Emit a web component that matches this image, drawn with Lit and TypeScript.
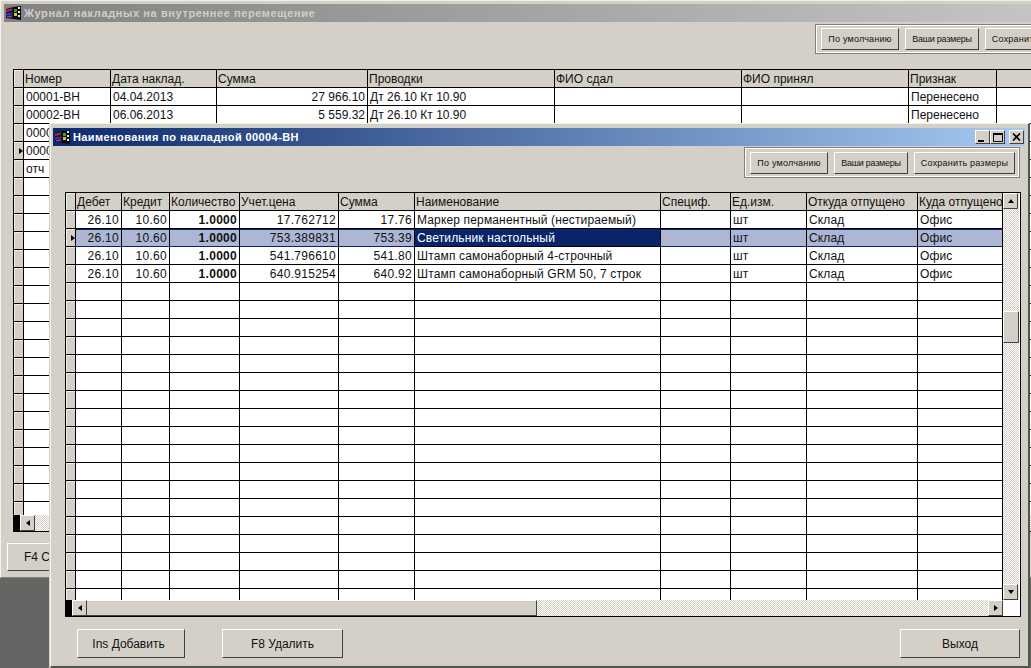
import { LitElement, html, css } from 'lit';
import { customElement } from 'lit/decorators.js';

type Column = { title: string; width: number; align?: string; bold?: boolean };

const backColumns: Column[] = [
  { title: 'Номер', width: 87 },
  { title: 'Дата наклад.', width: 106 },
  { title: 'Сумма', width: 151, align: 'right' },
  { title: 'Проводки', width: 187 },
  { title: 'ФИО сдал', width: 187 },
  { title: 'ФИО принял', width: 167 },
  { title: 'Признак', width: 88 },
  { title: '', width: 60 },
];

const backRows = [
  ['00001-ВН', '04.04.2013', '27 966.10', 'Дт 26.10 Кт 10.90', '', '', 'Перенесено', ''],
  ['00002-ВН', '06.06.2013', '5 559.32', 'Дт 26.10 Кт 10.90', '', '', 'Перенесено', ''],
  ['00003-ВН', '', '', '', '', '', '', ''],
  ['00004-ВН', '', '', '', '', '', '', ''],
  ['отч', '', '', '', '', '', '', ''],
];

const frontColumns: Column[] = [
  { title: 'Дебет', width: 46, align: 'right' },
  { title: 'Кредит', width: 48, align: 'right' },
  { title: 'Количество', width: 70, align: 'right', bold: true },
  { title: 'Учет.цена', width: 99, align: 'right' },
  { title: 'Сумма', width: 76, align: 'right' },
  { title: 'Наименование', width: 246 },
  { title: 'Специф.', width: 70 },
  { title: 'Ед.изм.', width: 76 },
  { title: 'Откуда отпущено', width: 111 },
  { title: 'Куда отпущено', width: 85 },
];

const frontRows = [
  ['26.10', '10.60', '1.0000', '17.762712', '17.76', 'Маркер перманентный (нестираемый)', '', 'шт', 'Склад', 'Офис'],
  ['26.10', '10.60', '1.0000', '753.389831', '753.39', 'Светильник настольный', '', 'шт', 'Склад', 'Офис'],
  ['26.10', '10.60', '1.0000', '541.796610', '541.80', 'Штамп самонаборный 4-строчный', '', 'шт', 'Склад', 'Офис'],
  ['26.10', '10.60', '1.0000', '640.915254', '640.92', 'Штамп самонаборный GRM 50, 7 строк', '', 'шт', 'Склад', 'Офис'],
];

const appIcon = html`<svg class="app-icon" width="16" height="14" viewBox="0 0 16 14">
  <path d="M0 3l7-2v12l-7-1z" fill="#15152a" />
  <path d="M0 4l6-1.500v2l-6 1.500z" fill="#c8203a" />
  <path d="M0 7.500l6-1v2l-6 1z" fill="#3038c8" />
  <path d="M1 10l5-.5v1.500l-5 .5z" fill="#b030a8" />
  <path d="M7 1l8-1v14l-8-1z" fill="#0c0c10" />
  <rect x="8" y="3" width="3" height="3" fill="#28a048" />
  <rect x="8" y="7" width="3" height="3" fill="#d8c428" />
  <path d="M12 1h2v2h-2zM12 5h2v2h-2zM12 9h2v2h-2z" fill="#ececec" />
</svg>`;

const arrow = (dir: string) => {
  const points: Record<string, string> = {
    up: '1,6 4,2 7,6',
    down: '1,2 4,6 7,2',
    left: '6,1 2,4 6,7',
    right: '2,1 6,4 2,7',
    marker: '4,1 8,4 4,7',
  };
  return html`<svg width="8" height="8" viewBox="0 0 8 8"><polygon points=${points[dir]} fill="#000" /></svg>`;
};

@customElement('app-root')
export class AppRoot extends LitElement {
  static styles = css`
    :host {
      display: block;
      position: relative;
      width: 1031px;
      height: 668px;
      overflow: hidden;
      background: #656563;
      font: 12px "Liberation Sans", Arial, sans-serif;
      color: #111;
    }

    .window {
      position: absolute;
      box-sizing: border-box;
      background: #d4d0c8;
      display: flex;
      flex-direction: column;
    }

    .back {
      left: 0;
      top: 0;
      width: 1060px;
      height: 578px;
      padding: 3px 0 0 3px;
      border-top: 1px solid #efeee9;
      border-left: 1px solid #f4f3ee;
      border-bottom: 1px solid #808080;
    }

    .front {
      left: 50px;
      top: 123px;
      width: 980px;
      height: 545px;
      padding: 4px 3px 0 2px;
      border-left: 1px solid #f4f3ee;
      border-top: 1px solid #f4f3ee;
      border-right: 2px solid #55554f;
      border-bottom: 2px solid #55554f;
      box-shadow: -1px 0 0 #d4d0c8;
    }

    .titlebar {
      height: 18px;
      flex: none;
      display: flex;
      align-items: center;
      gap: 2px;
      padding-left: 2px;
      font: bold 11px "Liberation Sans", Arial, sans-serif;
      white-space: nowrap;
    }

    .back .titlebar {
      background: linear-gradient(90deg, #828282, #c6c6c6);
      color: #cfcfc8;
      letter-spacing: 0.6px;
    }

    .front .titlebar {
      background: linear-gradient(90deg, #0d2a6c, #a6caf0);
      color: #fff;
      letter-spacing: 0.4px;
    }

    .caption {
      flex: 1;
    }

    .controls {
      display: flex;
      margin-right: 1px;
    }

    .control {
      width: 15px;
      height: 14px;
      box-sizing: border-box;
      display: flex;
      align-items: center;
      justify-content: center;
      background: #d4d0c8;
      border: 1px solid;
      border-color: #fff #404040 #404040 #fff;
    }

    .control.close {
      margin-left: 4px;
    }

    .toolbar {
      display: flex;
      justify-content: flex-end;
      align-items: flex-start;
      flex: none;
      box-sizing: border-box;
    }

    .back .toolbar {
      height: 47px;
      padding-top: 2px;
      margin-right: -31px;
    }

    .front .toolbar {
      height: 46px;
      padding-top: 1px;
      margin-right: 5px;
    }

    .group {
      display: flex;
      gap: 6px;
      padding: 3px 4px 3px 5px;
      border: 1px solid #808080;
      outline: 1px solid #fff;
      outline-offset: -2px;
    }

    .front .group {
      padding-top: 4px;
    }

    .tool {
      height: 22px;
      box-sizing: border-box;
      display: flex;
      align-items: center;
      justify-content: center;
      font-size: 9px;
      letter-spacing: 0.2px;
      background: #d4d0c8;
      border: 1px solid;
      border-color: #fff #404040 #404040 #fff;
      white-space: nowrap;
    }

    .w-default {
      width: 78px;
    }

    .w-sizes {
      width: 74px;
      letter-spacing: -0.25px;
    }

    .w-save {
      width: 101px;
    }

    .grid-wrap {
      position: relative;
      flex: none;
      box-sizing: border-box;
      background: #fff;
      border: 1px solid #000;
      overflow: hidden;
    }

    .back .grid-wrap {
      margin-left: 9px;
      width: 1060px;
      height: 463px;
    }

    .front .grid-wrap {
      margin-left: 12px;
      width: 956px;
      height: 425px;
    }

    .grid {
      display: grid;
    }

    .cell {
      height: 18px;
      box-sizing: border-box;
      padding: 0 2px;
      line-height: 19px;
      border-right: 1px solid #000;
      border-bottom: 1px solid #000;
      white-space: nowrap;
      overflow: hidden;
      background: #fff;
    }

    .front .cell {
      letter-spacing: 0.15px;
    }

    .front .cell.right {
      letter-spacing: 0.28px;
    }

    .cell.head,
    .front .cell.head {
      background: #d4d0c8;
      padding-left: 1px;
      letter-spacing: 0;
    }

    .indicator {
      background: #d4d0c8;
      padding: 0;
      display: flex;
      align-items: center;
      justify-content: flex-end;
      box-shadow: inset 1px 1px 0 #efeee9;
    }

    .right {
      text-align: right;
    }

    .bold {
      font-weight: bold;
    }

    .picked {
      background: #adb6d4;
      border-top: 1px solid #0a246a;
      border-bottom-color: #0a246a;
      line-height: 17px;
    }

    .focused {
      background: #0a246a;
      color: #fff;
      line-height: 19px;
    }

    .hscroll,
    .vscroll {
      position: absolute;
      display: flex;
      background: repeating-conic-gradient(#d4d0c8 0 25%, #fff 0 50%) 0 0 / 2px 2px;
    }

    .hscroll {
      left: 0;
      right: 0;
      bottom: 0;
      height: 16px;
    }

    .front .hscroll {
      right: 17px;
    }

    .vscroll {
      top: 0;
      right: 1px;
      bottom: 16px;
      width: 16px;
      flex-direction: column;
      justify-content: space-between;
    }

    .black {
      width: 6px;
      background: #000;
      flex: none;
    }

    .sb {
      width: 15px;
      height: 16px;
      flex: none;
      box-sizing: border-box;
      background: #d4d0c8;
      display: flex;
      align-items: center;
      justify-content: center;
      border: 1px solid;
      border-color: #fff #404040 #404040 #fff;
    }

    .thumb-h {
      height: 16px;
      width: 450px;
      flex: none;
      box-sizing: border-box;
      background: #d4d0c8;
      border-top: 1px solid #fff;
      border-right: 1px solid #404040;
      border-bottom: 1px solid #404040;
    }

    .thumb-v {
      position: absolute;
      top: 118px;
      left: 0;
      width: 16px;
      height: 32px;
      box-sizing: border-box;
      background: #d4d0c8;
      border: 1px solid;
      border-color: #fff #404040 #404040 #fff;
    }

    .fill {
      flex: 1;
    }

    .actions {
      display: flex;
      flex: none;
    }

    .back .actions {
      padding: 11px 0 0 3px;
    }

    .front .actions {
      padding: 12px 0 0 24px;
      justify-content: space-between;
      width: 967px;
      box-sizing: border-box;
    }

    .action {
      height: 29px;
      box-sizing: border-box;
      display: flex;
      align-items: center;
      justify-content: center;
      background: #d4d0c8;
      font-size: 12px;
      border: 1px solid;
      border-color: #fff #404040 #404040 #fff;
    }

    .back .action {
      width: 136px;
      height: 28px;
    }

    .w-add {
      width: 108px;
      padding-right: 5px;
    }

    .w-del {
      width: 121px;
    }

    .w-exit {
      width: 120px;
    }

    .left-actions {
      display: flex;
      gap: 37px;
    }
  `;

  private renderGrid(columns: Column[], rows: string[][], total: number, picked: number, focused: number) {
    const template = `10px ${columns.map((c) => `${c.width}px`).join(' ')}`;
    const blanks = Array.from({ length: total }, (_, i) => rows[i] ?? columns.map(() => ''));
    return html`<div class="grid" style="grid-template-columns: ${template}">
      <div class="cell head indicator"></div>
      ${columns.map((c) => html`<div class="cell head">${c.title}</div>`)}
      ${blanks.map((row, r) => html`
        <div class="cell indicator">${r === picked ? arrow('marker') : ''}</div>
        ${row.map((text, i) => {
          const col = columns[i];
          const classes = ['cell'];
          if (col.align === 'right') classes.push('right');
          if (col.bold) classes.push('bold');
          if (r === picked && focused >= 0) classes.push(i === focused ? 'focused' : 'picked');
          return html`<div class=${classes.join(' ')}>${text}</div>`;
        })}
      `)}
    </div>`;
  }

  private renderSizeButtons() {
    return html`<div class="group">
      <div class="tool w-default">По умолчанию</div>
      <div class="tool w-sizes">Ваши размеры</div>
      <div class="tool w-save">Сохранить размеры</div>
    </div>`;
  }

  render() {
    return html`
      <section class="window back">
        <div class="titlebar">${appIcon}<span class="caption">Журнал накладных на внутреннее перемещение</span></div>
        <div class="toolbar">${this.renderSizeButtons()}</div>
        <div class="grid-wrap">
          ${this.renderGrid(backColumns, backRows, 24, 3, -1)}
          <div class="hscroll">
            <div class="black"></div>
            <div class="sb">${arrow('left')}</div>
            <div class="fill"></div>
          </div>
        </div>
        <div class="actions">
          <div class="action">F4 Сформировать</div>
        </div>
      </section>

      <section class="window front">
        <div class="titlebar">
          ${appIcon}<span class="caption">Наименования по накладной 00004-ВН</span>
          <div class="controls">
            <div class="control">
              <svg width="9" height="9" viewBox="0 0 9 9"><rect x="0" y="7" width="6" height="2" fill="#000" /></svg>
            </div>
            <div class="control">
              <svg width="10" height="9" viewBox="0 0 10 9"><path d="M0.500 1.500h9v7h-9z" fill="none" stroke="#000" /><rect width="10" height="2" fill="#000" /></svg>
            </div>
            <div class="control close">
              <svg width="9" height="8" viewBox="0 0 9 8"><path d="M1 0.500l7 7M8 0.500l-7 7" stroke="#000" stroke-width="1.600" fill="none" /></svg>
            </div>
          </div>
        </div>
        <div class="toolbar">${this.renderSizeButtons()}</div>
        <div class="grid-wrap">
          ${this.renderGrid(frontColumns, frontRows, 22, 1, 5)}
          <div class="vscroll">
            <div class="sb">${arrow('up')}</div>
            <div class="thumb-v"></div>
            <div class="sb">${arrow('down')}</div>
          </div>
          <div class="hscroll">
            <div class="black"></div>
            <div class="sb">${arrow('left')}</div>
            <div class="thumb-h"></div>
            <div class="fill"></div>
            <div class="sb">${arrow('right')}</div>
          </div>
        </div>
        <div class="actions">
          <div class="left-actions">
            <div class="action w-add">Ins Добавить</div>
            <div class="action w-del">F8 Удалить</div>
          </div>
          <div class="action w-exit">Выход</div>
        </div>
      </section>
    `;
  }
}
